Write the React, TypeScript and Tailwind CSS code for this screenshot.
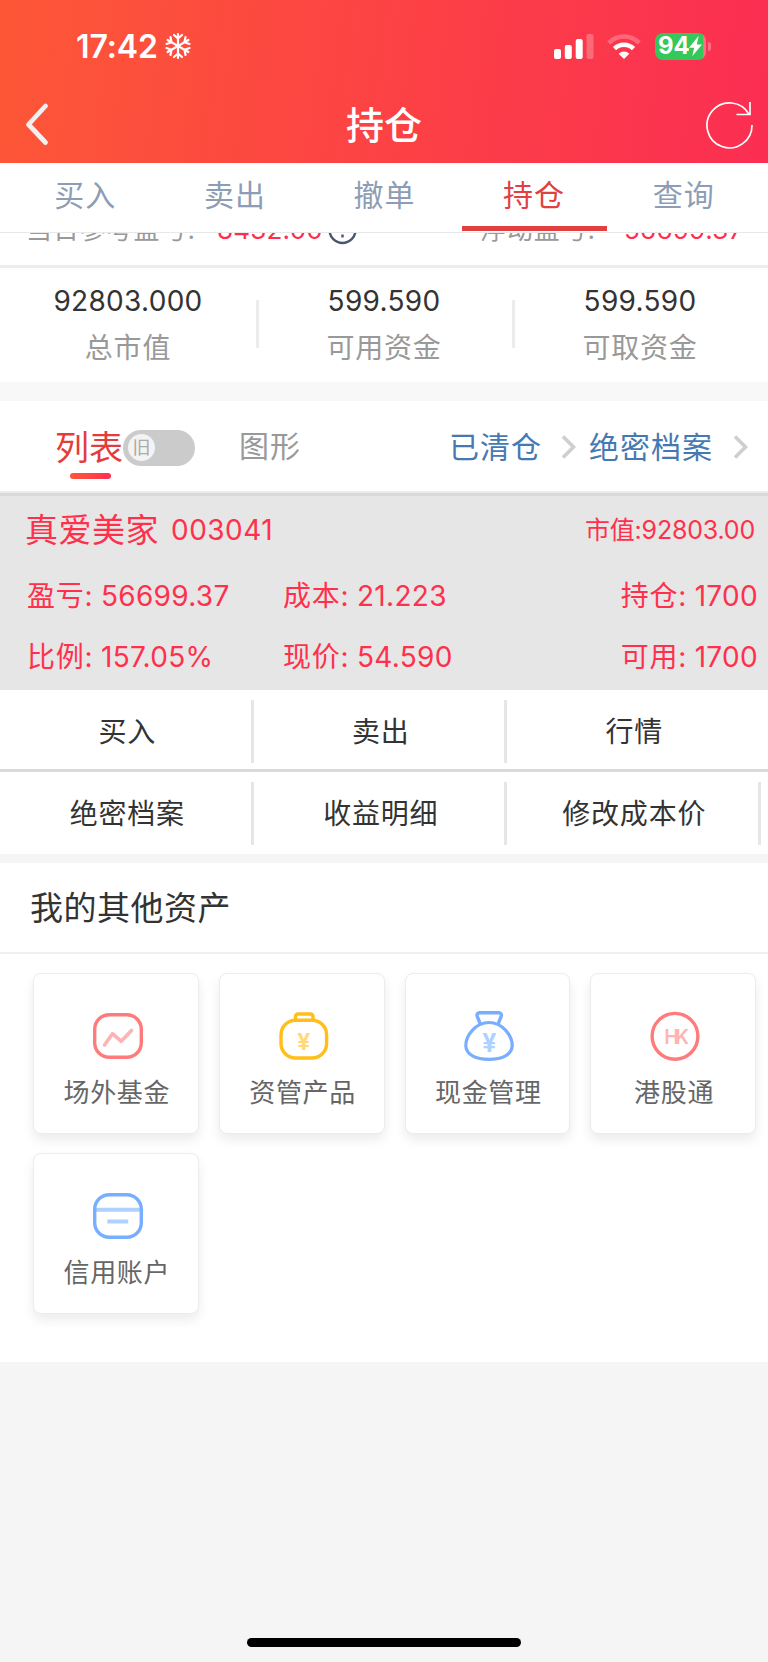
import type { ReactNode } from 'react';

const tabs = ['买入', '卖出', '撤单', '持仓', '查询'];

const funds = [
  { value: '92803.000', label: '总市值' },
  { value: '599.590', label: '可用资金' },
  { value: '599.590', label: '可取资金' },
];

const actionRows = [
  ['买入', '卖出', '行情'],
  ['绝密档案', '收益明细', '修改成本价'],
];

const assets = [
  {
    title: '场外基金',
    icon: (
      <svg className="h-[52px] w-[52px]" viewBox="0 0 52 52" fill="none">
        <rect x="2.7" y="4.7" width="46.6" height="42.6" rx="14.5" stroke="#ff7b7b" strokeWidth="3.4" />
        <path d="M12.5 35l8-11.3 8.7 7.6L39.5 20.5" stroke="#ffb3b3" strokeWidth="3.6" strokeLinecap="round" strokeLinejoin="round" />
      </svg>
    ),
  },
  {
    title: '资管产品',
    icon: (
      <svg className="h-[52px] w-[52px]" viewBox="0 0 52 52" fill="none">
        <path d="M17.5 10V6.5a2.5 2.5 0 012.5-2.5h12.5a2.5 2.5 0 012.5 2.5V10" stroke="#ffbe18" strokeWidth="3.4" />
        <rect x="3" y="10.3" width="45.6" height="37.7" rx="14.5" stroke="#ffbe18" strokeWidth="3.4" />
        <text x="25.8" y="39.5" textAnchor="middle" fontSize="23" fontWeight="700" fill="#ffd978">¥</text>
      </svg>
    ),
  },
  {
    title: '现金管理',
    icon: (
      <svg className="h-[52px] w-[52px]" viewBox="0 0 52 52" fill="none">
        <path d="M17.5 14.5l-3.3-8.2a2.5 2.5 0 012.5-3.5h19a2.5 2.5 0 012.5 3.5l-3.3 8.2" stroke="#78aeff" strokeWidth="3.4" strokeLinejoin="round" />
        <path d="M26 12.5C13 12.5 2.8 25 2.8 35.5 2.8 44.5 13 49.3 26 49.3s23.2-4.8 23.2-13.8C49.2 25 39 12.5 26 12.5z" stroke="#78aeff" strokeWidth="3.2" />
        <text x="26.3" y="41.5" textAnchor="middle" fontSize="25" fontWeight="700" fill="#b0d0ff">¥</text>
      </svg>
    ),
  },
  {
    title: '港股通',
    icon: (
      <svg className="h-[52px] w-[52px]" viewBox="0 0 52 52" fill="none">
        <circle cx="26" cy="26.3" r="22.9" stroke="#ff7b7b" strokeWidth="3.4" />
        <text x="15.3" y="33.8" fontSize="19.5" fontWeight="600" letterSpacing="-3.6" fill="#ffb3b3">HK</text>
      </svg>
    ),
  },
  {
    title: '信用账户',
    icon: (
      <svg className="h-[52px] w-[52px]" viewBox="0 0 52 52" fill="none">
        <path d="M4 19.7h44M15.3 31.5h21" stroke="#b0d0ff" strokeWidth="4" />
        <rect x="2.7" y="4.7" width="46.6" height="42.6" rx="14.5" stroke="#78aeff" strokeWidth="3.4" />
      </svg>
    ),
  },
];

function StatusBar() {
  return (
    <div className="flex h-[92px] items-center pl-[76px] pr-[57px] text-white">
      <span className="mt-[2px] text-[32px] font-semibold leading-none tracking-[-0.1px]">17:42</span>
      <svg className="ml-[6px] h-7 w-7" viewBox="-14 -14 28 28" fill="none" stroke="currentColor" strokeWidth="2.2" strokeLinecap="round" strokeLinejoin="round">
        {[0, 60, 120, 180, 240, 300].map((angle) => (
          <path key={angle} transform={`rotate(${angle})`} d="M0 0V-12M-4-11L0-7.5 4-11" />
        ))}
      </svg>
      <svg className="ml-auto h-[27px] w-10" viewBox="0 0 40 27" fill="currentColor">
        <rect x="0" y="16" width="7" height="10" rx="2" />
        <rect x="10.8" y="12" width="7" height="14" rx="2" />
        <rect x="21.7" y="6" width="7" height="20" rx="2" />
        <rect x="32.5" y="1" width="7" height="25" rx="2" opacity="0.25" />
      </svg>
      <svg className="ml-[13px] h-[27px] w-[34px]" viewBox="0 0 34 27" fill="none" stroke="currentColor" strokeWidth="4.6">
        <path d="M1.8 9.8a21.5 21.5 0 0130.4 0" opacity="0.25" />
        <path d="M7.5 15.7a13.5 13.5 0 0119 0" />
        <path d="M17 26l-5.3-5.3a7.5 7.5 0 0110.6 0z" fill="currentColor" stroke="none" />
      </svg>
      <div className="ml-[14px] flex items-center">
        <div className="flex h-[27px] w-[51px] items-center rounded-lg bg-linear-to-r from-[#34c759] from-95% to-[#fb7085] to-95% pl-[3px]">
          <span className="text-[24px] font-bold leading-none tracking-[-0.2px]">94</span>
          <svg className="h-[22px] w-[13px]" viewBox="0 0 12 20" fill="currentColor">
            <path d="M9 0.500L0 11.500h4.800L3 19.500 12 8.500H7.200z" />
          </svg>
        </div>
        <div className="ml-[2px] h-[9px] w-[3px] rounded-r-full bg-white/30" />
      </div>
    </div>
  );
}

function NavBar() {
  return (
    <div className="grid h-[71px] grid-cols-[1fr_auto_1fr] items-center pl-[25px] pr-[14px] text-white">
      <svg className="mb-[7px] h-11 w-[50px]" viewBox="0 0 50 44" fill="none" stroke="#f0f0f0" strokeWidth="4.8" strokeLinecap="round" strokeLinejoin="round">
        <path d="M20.5 4L3.5 22.5l17 18" />
      </svg>
      <h1 className="mb-[5px] mr-[11px] text-[38px] font-medium leading-none">持仓</h1>
      <svg className="mb-[8px] h-[50px] w-[50px] justify-self-end" viewBox="0 0 50 50" fill="none" stroke="currentColor" strokeWidth="1.7">
        <path d="M48 26A22.5 22.5 0 1 1 45.2 15.5M46 3v12.5H32.5" />
      </svg>
    </div>
  );
}

function Chevron() {
  return (
    <svg className="h-6 w-4" viewBox="0 0 16 24" fill="none" stroke="#cfcfcf" strokeWidth="3.6">
      <path d="M2 1.5L12.5 12 2 22.5" />
    </svg>
  );
}

function Pair({ label, value, className = '' }: { label: string; value: string; className?: string }) {
  return (
    <div className={`flex items-center whitespace-pre ${className}`}>
      <span className="tracking-[0.7px]">{label}</span>
      <span>: {value}</span>
    </div>
  );
}

function AssetCard({ title, icon }: { title: string; icon: ReactNode }) {
  return (
    <div className="flex h-[161px] flex-col items-center rounded-lg border border-[#ececec] bg-white pt-[36px] shadow-[0_6px_12px_rgba(0,0,0,0.08)]">
      <div className="ml-[4px]">{icon}</div>
      <span className="ml-[2px] mt-[17px] text-[26px] leading-[28px] tracking-[0.7px] text-[#666]">{title}</span>
    </div>
  );
}

export default function App() {
  return (
    <div className="flex h-[1662px] w-[768px] flex-col overflow-hidden bg-[#f5f5f5] font-['Inter','Noto_Sans_CJK_SC',sans-serif]">
      <header className="bg-linear-[97deg] from-[#fd5737] to-[#fb2e52]">
        <StatusBar />
        <NavBar />
      </header>

      <nav className="grid h-[70px] grid-cols-5 border-b border-[#e8e8e8] bg-white pl-[11px] pr-[9px]">
        {tabs.map((tab) => (
          <div
            key={tab}
            className={`flex justify-center pr-[1px] pt-[14px] text-[30px] leading-[36px] tracking-[1px] ${
              tab === '持仓' ? 'mx-[2.5px] mb-[1px] border-b-[5px] border-[#e04040] text-[#e04040]' : 'text-[#8c9db5]'
            }`}
          >
            {tab}
          </div>
        ))}
      </nav>

      {/* scrolled under the tab bar, only the lower part shows */}
      <div className="h-[35px] overflow-hidden border-b-[3px] border-[#ededed] bg-white">
        <div className="-mt-[19px] flex h-[32px] items-center text-[26px] leading-none">
          <span className="ml-[26px] w-[191px] tracking-[0.9px] text-[#999]">当日参考盈亏:</span>
          <span className="w-[111px] tracking-[0.2px] text-[#ff2e4c]">8432.00</span>
          <svg className="h-[29px] w-[29px]" viewBox="0 0 29 29" fill="none" stroke="#4a5670" strokeWidth="2.4">
            <circle cx="14.5" cy="14" r="13" />
            <path d="M14.5 7v8M14.5 18.5v3" />
          </svg>
          <span className="ml-[123px] w-[144px] tracking-[0.9px] text-[#999]">浮动盈亏:</span>
          <span className="tracking-[0.3px] text-[#ff2e4c]">56699.37</span>
        </div>
      </div>

      <section className="flex h-[114px] shrink-0 items-center bg-white">
        {funds.map((item, index) => (
          <div key={item.label} className="flex flex-1 items-center">
            {index > 0 && <div className="-mt-[2px] h-12 w-[3px] bg-[#ececec]" />}
            <div className={`-mt-[2px] flex flex-1 flex-col items-center ${index > 0 ? 'pr-[3px]' : ''}`}>
              <span className="text-[28px] leading-[36px] tracking-[0.3px] text-[#333]">{item.value}</span>
              <span className="mt-[11px] text-[28px] leading-[36px] tracking-[0.8px] text-[#999]">{item.label}</span>
            </div>
          </div>
        ))}
      </section>
      <div className="h-[19px] shrink-0 bg-[#f8f8f8]" />

      <section className="flex h-[92px] shrink-0 items-center border-b-2 border-[#ececec] bg-white">
        <div className="ml-[55px] flex flex-col">
          <span className="mt-[11px] h-[46px] w-[68px] whitespace-nowrap text-[34px] leading-[46px] text-[#e43c3c]">列表</span>
          <div className="ml-[15px] mt-[2px] h-[6px] w-[41px] rounded-full bg-linear-to-r from-[#ff5538] to-[#ff2e52]" />
        </div>
        <div className="mt-[3px] flex h-9 w-[72px] items-center rounded-full bg-[#cbcbcb] pl-[5px]">
          <div className="flex h-[27px] w-[27px] items-center justify-center rounded-full bg-[#f3f3f3] text-[18px] leading-none text-[#aaa]">旧</div>
        </div>
        <span className="ml-[44px] text-[30px] tracking-[1px] text-[#999]">图形</span>
        <div className="ml-auto flex items-center pr-[19px] pt-[2px] text-[30px] tracking-[1px] text-[#4679b2]">
          <span className="mr-[19px]">已清仓</span>
          <Chevron />
          <span className="ml-[12px] mr-[20px]">绝密档案</span>
          <Chevron />
        </div>
      </section>

      <section className="h-[197px] shrink-0 border-t-[3px] border-[#d9d9d9] bg-[#e6e6e6] text-[28px] leading-[40px] tracking-[0.3px] text-[#ff304c]">
        <div className="flex h-[67px] items-center pl-[25px] pr-[13px]">
          <span className="text-[33px] tracking-[0.5px]">真爱美家</span>
          <span className="ml-[12px] tracking-[0.5px]">003041</span>
          <span className="ml-auto text-[25px] tracking-[-0.2px]">市值:92803.00</span>
        </div>
        <div className="grid grid-cols-[256px_1fr_1fr] gap-y-[21px] pl-[27px] pr-[10px] pt-[13px]">
          <Pair label="盈亏" value="56699.37" />
          <Pair label="成本" value="21.223" />
          <Pair label="持仓" value="1700" className="justify-end" />
          <Pair label="比例" value="157.05%" />
          <Pair label="现价" value="54.590" />
          <Pair label="可用" value="1700" className="justify-end" />
        </div>
      </section>

      <section className="shrink-0 bg-white text-[28px] tracking-[0.8px] text-[#333]">
        {actionRows.map((row, rowIndex) => (
          <div
            key={rowIndex}
            className={`flex h-[82px] pt-[10px] ${rowIndex === 0 ? 'border-b-[3px] border-[#dadada]' : ''}`}
          >
            {row.map((name, index) => (
              <div
                key={name}
                className={`flex h-[63px] w-[253.5px] items-center justify-center border-r-[3px] pl-[4px] ${
                  rowIndex === 0 && index === 2 ? 'border-transparent' : 'border-[#e6e6e6]'
                }`}
              >
                {name}
              </div>
            ))}
          </div>
        ))}
      </section>

      <section className="mt-[9px] h-[499px] shrink-0 bg-white">
        <h2 className="flex h-[91px] items-center border-b-2 border-[#efefef] pl-[30px] pt-[2px] text-[33px] tracking-[0.5px] text-[#333]">
          我的其他资产
        </h2>
        <div className="grid grid-cols-4 gap-x-[20px] gap-y-[19px] pl-[33px] pr-[12px] pt-[19px]">
          {assets.map((asset) => (
            <AssetCard key={asset.title} title={asset.title} icon={asset.icon} />
          ))}
        </div>
      </section>

      <div className="mx-auto mb-[15px] mt-auto h-[9px] w-[274px] shrink-0 rounded-full bg-black" />
    </div>
  );
}
